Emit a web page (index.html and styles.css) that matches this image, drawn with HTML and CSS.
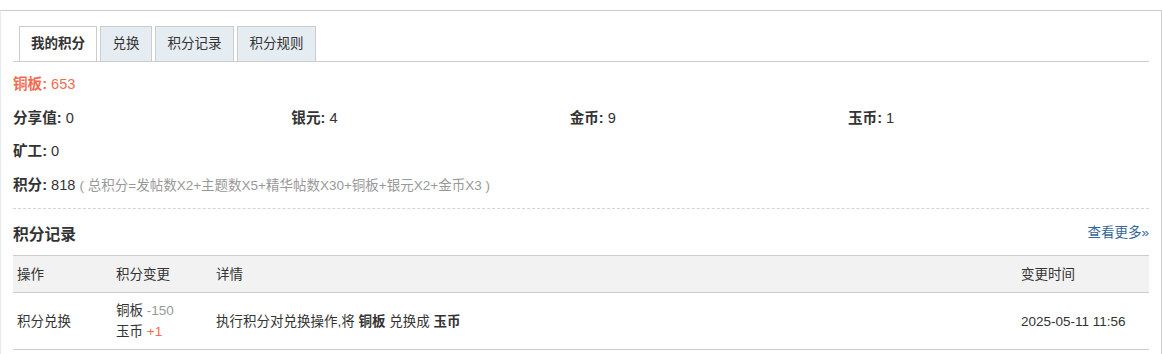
FILE: index.html
```html
<!DOCTYPE html>
<html lang="zh-CN">
<head>
    <meta charset="UTF-8">
    <title>我的积分</title>
    <link rel="stylesheet" href="styles.css">
</head>
<body>
    <div class="panel">
        <ul class="tabs">
            <li class="active"><a href="#">我的积分</a></li>
            <li><a href="#">兑换</a></li>
            <li><a href="#">积分记录</a></li>
            <li><a href="#">积分规则</a></li>
        </ul>

        <ul class="creditl">
            <li class="xi1 full"><b>铜板:</b> 653</li>
            <li><b>分享值:</b> 0</li>
            <li><b>银元:</b> 4</li>
            <li><b>金币:</b> 9</li>
            <li><b>玉币:</b> 1</li>
            <li><b>矿工:</b> 0</li>
            <li class="full"><b>积分:</b> 818 <span class="tip">( 总积分=发帖数X2+主题数X5+精华帖数X30+铜板+银元X2+金币X3 )</span></li>
        </ul>

        <div class="section-head">
            <h3>积分记录</h3>
            <a href="#" class="more">查看更多&raquo;</a>
        </div>

        <table class="log">
            <thead>
                <tr>
                    <th class="c1">操作</th>
                    <th class="c2">积分变更</th>
                    <th>详情</th>
                    <th class="c4">变更时间</th>
                </tr>
            </thead>
            <tbody>
                <tr>
                    <td>积分兑换</td>
                    <td class="change">铜板 <span class="minus">-150</span><br>玉币 <span class="plus">+1</span></td>
                    <td>执行积分对兑换操作,将 <b>铜板</b> 兑换成 <b>玉币</b></td>
                    <td>2025-05-11 11:56</td>
                </tr>
            </tbody>
        </table>
    </div>
</body>
</html>
```

FILE: styles.css
```css
body {
    margin: 0;
    padding-top: 10px;
    background: #fff;
    color: #333;
    font-family: "Liberation Sans", "Noto Sans CJK SC", sans-serif;
    font-size: 13.5px;
}
a {
    color: #336699;
    text-decoration: none;
}
.panel {
    border: 1px solid #ccc;
    border-left-color: #e3ebf3;
    border-bottom: none;
    padding: 15px 12px 4px;
    min-height: 344px;
    box-sizing: border-box;
}
.tabs {
    list-style: none;
    margin: 0;
    padding: 0 0 0 6px;
    display: flex;
    gap: 3px;
    border-bottom: 1px solid #ccc;
}
.tabs li {
    border: 1px solid #ccc;
    border-bottom: none;
    background: #e5ecf2;
}
.tabs li a {
    display: block;
    padding: 0 11.5px;
    line-height: 34px;
    color: #333;
}
.tabs li.active {
    background: #fff;
}
.tabs li.active a {
    font-weight: bold;
    padding: 0 11px;
}
.creditl {
    list-style: none;
    margin: 6px 0 0;
    padding: 0;
    display: grid;
    grid-template-columns: repeat(4, 24.5%);
    font-size: 14.6px;
}
.creditl li {
    line-height: 33.5px;
}
.creditl li.full {
    grid-column: 1 / -1;
}
.creditl .xi1 {
    color: #f26c4f;
}
.creditl .tip {
    color: #999;
    font-size: 13.5px;
}
.section-head {
    margin-top: 6px;
    border-top: 1px dashed #d4d4d4;
    display: flex;
    justify-content: space-between;
    align-items: center;
    height: 46px;
}
.section-head h3 {
    margin: 0;
    font-size: 15.75px;
    position: relative;
    top: 1px;
}
.section-head .more {
    font-size: 13.5px;
    position: relative;
    top: -1px;
}
.log {
    width: 100%;
    border-collapse: collapse;
    table-layout: fixed;
}
.log th,
.log td {
    text-align: left;
    font-weight: normal;
    padding: 7px 4px;
    border-bottom: 1px solid #ccc;
    line-height: 21px;
}
.log th {
    background: #f2f2f2;
    border-top: 1px solid #ccc;
    padding: 8px 4px 7px;
}
.log .c1 { width: 91px; }
.log .c2 { width: 92px; }
.log .c4 { width: 124px; }
.log .minus { color: #999; }
.log .plus { color: #f26c4f; }
.log td b { font-weight: bold; }
```
